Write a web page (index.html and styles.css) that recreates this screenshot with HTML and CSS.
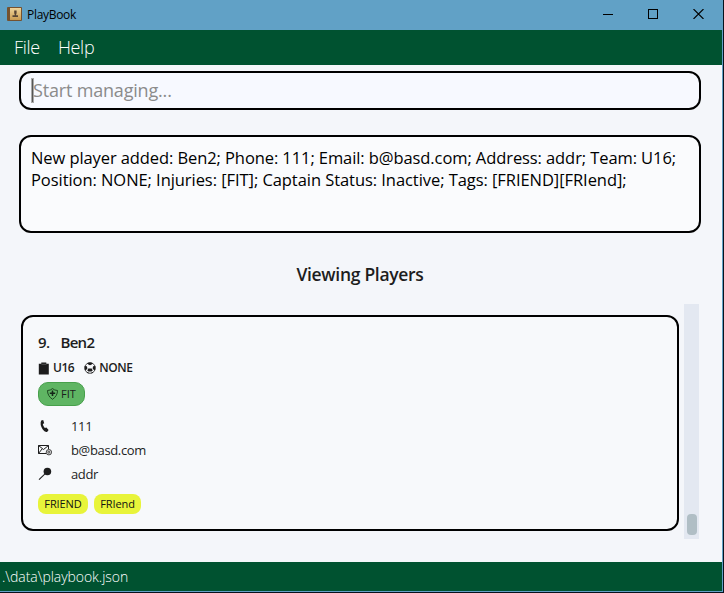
FILE: index.html
```html
<!DOCTYPE html>
<html lang="en">
<head>
<meta charset="utf-8">
<title>PlayBook</title>
<link rel="stylesheet" href="styles.css">
</head>
<body>
<div class="window">
  <header class="titlebar">
    <svg class="app-icon" width="15" height="15" viewBox="0 0 15 15">
      <defs><linearGradient id="cover" x1="0" y1="0" x2="0" y2="1"><stop offset="0" stop-color="#efd49a"/><stop offset="1" stop-color="#c99b52"/></linearGradient></defs>
      <rect x="0" y="0" width="15" height="14" rx="1" fill="#75522f"/>
      <rect x="3" y="1" width="11" height="12" fill="url(#cover)"/>
      <path d="M7.200 3.500h2.400v2.800l-.5 1.200v.8h1.900v1.800H5.500V8.300h2.200v-.8l-.5-1.200z" fill="#574536"/>
    </svg>
    <span class="app-name">PlayBook</span>
    <div class="controls">
      <svg width="10" height="10" viewBox="0 0 10 10"><path d="M0 5.500h10" stroke="#000"/></svg>
      <svg width="10" height="10" viewBox="0 0 10 10"><rect x=".5" y=".5" width="9" height="9" fill="none" stroke="#000"/></svg>
      <svg width="11" height="10" viewBox="0 0 11 10"><path d="M.5 0l10 10M10.500 0l-10 10" stroke="#000" stroke-width="1.100"/></svg>
    </div>
  </header>
  <nav class="menubar"><span>File</span><span>Help</span></nav>
  <main class="content">
    <div class="command"><span class="caret"></span><span class="placeholder">Start managing...</span></div>
    <div class="result"><div class="line1">New player added: Ben2; Phone: 111; Email: b@basd.com; Address: addr; Team: U16;</div><div class="line2">Position: NONE; Injuries: [FIT]; Captain Status: Inactive; Tags: [FRIEND][FRIend];</div></div>
    <h1 class="heading"><span>Viewing Players</span></h1>
    <div class="list">
      <article class="card">
        <div class="name"><span class="index">9.</span><span>Ben2</span></div>
        <div class="meta">
          <svg width="12" height="13" viewBox="0 0 12 13"><path d="M.8 1.700h2.500V.5h5v1.200h2.500v10.800H.8z" fill="#1d1d1d"/><path d="M3.500 2.300h5" stroke="#777" stroke-width=".6"/></svg>
          <span class="team">U16</span>
          <svg class="ball" width="12" height="12" viewBox="0 0 12 12"><circle cx="6" cy="6" r="5.300" fill="#f7f8fa" stroke="#1d1d1d" stroke-width=".8"/><path d="M3 1.200Q6-.2 9 1.200L7.700 2.600 6 3.300 4.300 2.600zM.7 4l2.200.3.500 2.200-1.500 1.800-1-.5zM11.300 4l-2.200.3-.5 2.200 1.500 1.800 1-.5zM4.300 6.400h3.400l1 2L7.500 9.500h-3L3.300 8.400zM3 9.900l1.500.5.3 1.200-2-.8zM9 9.900l-1.500.5-.3 1.200 2-.8z" fill="#1d1d1d"/></svg>
          <span class="position">NONE</span>
        </div>
        <div class="status">
          <svg width="11" height="12" viewBox="0 0 11 12"><path d="M.5 2.500Q3.500 2.500 5.500.6 7.500 2.500 10.500 2.500 10.500 8 5.500 11.300.500 8 .5 2.500z" fill="none" stroke="#173d1a" stroke-width=".9"/><path d="M4.700 2.500h1.600v1.900h1.900v1.600H6.300v2H4.700v-2H2.800V4.400h1.900z" fill="#142417"/></svg>
          <span>FIT</span>
        </div>
        <div class="row">
          <svg width="14" height="14" viewBox="0 0 14 14"><path d="M3.200 1.500L5.200 1l1 3.200-1.400.9q.4 2.500 2 4l1.600-.6 2.200 2.600-1.300 1.600Q7 13.800 4.600 10.300 1.500 5.200 3.200 1.500z" fill="#1d1d1d"/></svg>
          <span class="phone">111</span>
        </div>
        <div class="row">
          <svg width="14" height="14" viewBox="0 0 14 14"><path d="M8 10.500H.5V2.500h10V6M.5 2.500l5 4 5-4M.5 10.500l3.500-4.500" fill="none" stroke="#1d1d1d" stroke-width="1"/><circle cx="10.900" cy="9.200" r="2.700" fill="#ddd" stroke="#1d1d1d" stroke-width=".8"/><circle cx="10.800" cy="9.200" r="1" fill="none" stroke="#1d1d1d" stroke-width=".7"/></svg>
          <span class="email">b@basd.com</span>
        </div>
        <div class="row">
          <svg width="14" height="14" viewBox="0 0 14 14"><circle cx="9.400" cy="4.500" r="3.800" fill="#1d1d1d"/><path d="M7.500 6.300L1 12.700" stroke="#1d1d1d" stroke-width="1.100"/></svg>
          <span class="address">addr</span>
        </div>
        <div class="tags"><span class="tag tag-a">FRIEND</span><span class="tag tag-b">FRIend</span></div>
      </article>
      <div class="track"><div class="thumb"></div></div>
    </div>
  </main>
  <footer class="footer"><span>.\data\playbook.json</span></footer>
</div>
</body>
</html>
```
FILE: styles.css
```css
* { box-sizing: border-box; }
body { margin: 0; background: #07121d; font-family: "Open Sans", "Noto Sans", sans-serif; }
svg { display: block; flex: none; }
span { white-space: pre; }
.window { width: 723px; height: 592px; display: flex; flex-direction: column; background: #f4f6fa; border-right: 1px solid #61a1c6; border-bottom: 1px solid #61a1c6; }
.titlebar { height: 30px; flex: none; display: flex; align-items: center; background: #61a1c6; padding: 0 18px 2px 7px; margin-right: -1px; }
.app-name { margin-left: 5px; font-size: 12px; line-height: 18px; letter-spacing: -0.3px; color: #000; position: relative; top: 1px; }
.controls { margin-left: auto; display: flex; align-items: center; gap: 35px; }
.controls { padding-right: 1px; }
.menubar { height: 35px; flex: none; display: flex; align-items: center; gap: 18px; padding: 0 14px 2px; background: #005230; color: #fff; font-size: 18px; font-weight: 300; letter-spacing: -0.3px; line-height: 24px; }
.content { flex: 1; padding: 6px 21px 0 19px; display: flex; flex-direction: column; }
.command { height: 39px; flex: none; display: flex; align-items: center; border: 2px solid #000; border-radius: 12px; background: #f7f9ff; padding-left: 11px; }
.caret { width: 1px; height: 23px; background: #555; outline: 0.5px solid #aaa; }
.placeholder { font-size: 18px; line-height: 24px; color: #8b8b8b; letter-spacing: -0.18px; margin-top: -2px; }
.result { height: 98px; flex: none; margin-top: 25px; border: 2px solid #000; border-radius: 12px; background: #fafbfd; padding: 10px; font-size: 16.5px; line-height: 22px; color: #000; white-space: nowrap; }
.line1 { letter-spacing: -0.09px; }
.line2 { letter-spacing: -0.06px; }
.heading { margin: 29px 0 0; height: 24px; font-size: 17.5px; line-height: 24px; font-weight: 600; letter-spacing: -0.3px; text-align: center; color: #1d1d1d; }
.list { margin: 18px -17px 0 2px; height: 235px; display: flex; }
.card { width: 658px; height: 216px; margin-top: 11px; border: 2px solid #000; border-radius: 12px; background: #f7f9fb; padding: 13px 15px; color: #1d1d1d; }
.track { margin-left: 5px; width: 15px; height: 235px; background: #e3e8f1; padding: 210px 2px 4px 3px; }
.thumb { height: 21px; border-radius: 4px; background: #b0bec5; }
.name { height: 24px; display: flex; gap: 11px; font-size: 15px; line-height: 24px; font-weight: 600; letter-spacing: -0.65px; }
.meta { height: 20px; margin-top: 4px; display: flex; align-items: center; font-size: 12px; font-weight: 600; letter-spacing: -0.45px; line-height: 20px; }
.meta span { margin-left: 3px; }
.meta .ball { margin-left: 10px; }
.status { width: 47px; height: 24px; margin-top: 4px; display: flex; align-items: center; gap: 3px; padding-left: 8px; border: 1px solid #47a04b; border-radius: 10px; background: #5fb563; font-size: 11px; font-weight: 500; line-height: 18px; color: #1d1d1d; }
.row { height: 24px; display: flex; align-items: center; gap: 19px; font-size: 13px; line-height: 20px; letter-spacing: -0.35px; }
.status + .row { margin-top: 8px; }
.tags { margin-top: 8px; display: flex; gap: 6px; }
.tag { height: 20px; border-radius: 8px; background: #e8f43a; font-size: 11px; font-weight: 500; line-height: 20px; text-align: center; letter-spacing: -0.1px; color: #111; }
.tag-a { width: 50px; }
.tag-b { width: 47px; }
.footer { height: 29px; flex: none; padding: 3px 2px; background: #005230; color: #fff; font-size: 14px; line-height: 24px; font-weight: 300; letter-spacing: -0.05px; }
```
